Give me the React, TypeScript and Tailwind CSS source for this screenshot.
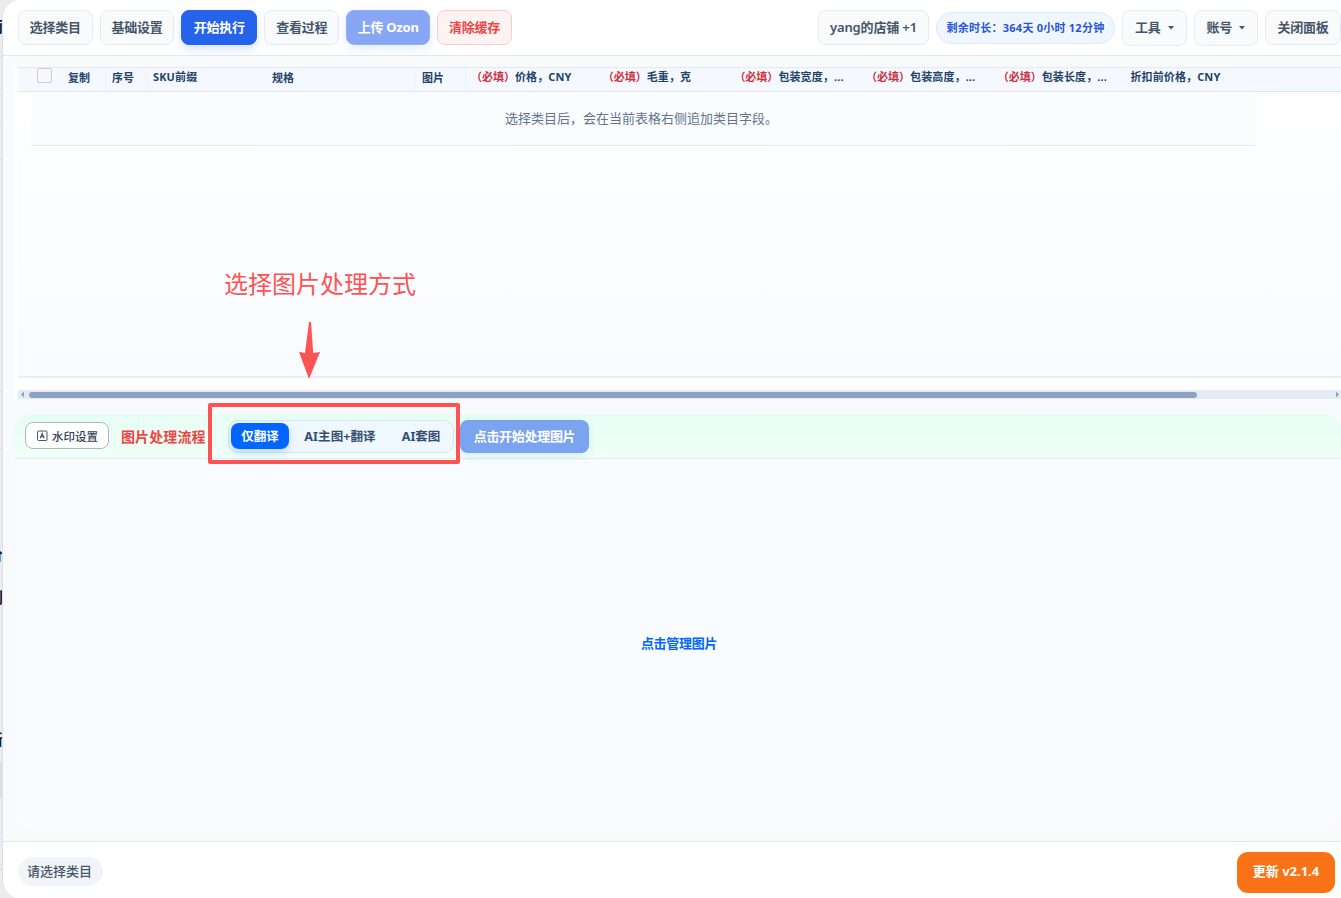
import React from "react";

const columns = [
  { label: "复制", width: "w-[44px]", divider: true },
  { label: "序号", width: "w-[41px]", divider: true },
  { label: "SKU前缀", width: "w-[119px]", high: true },
  { label: "规格", width: "w-[150px]", divider: true },
  { label: "图片", width: "w-[50px]", divider: true },
  { label: "价格，CNY", width: "w-[131.7px]", required: true, high: true },
  { label: "毛重，克", width: "w-[131.7px]", required: true, high: true },
  { label: "包装宽度，...", width: "w-[131.7px]", required: true, high: true },
  { label: "包装高度，...", width: "w-[131.7px]", required: true, high: true },
  { label: "包装长度，...", width: "w-[131.7px]", required: true, high: true },
  { label: "折扣前价格，CNY", width: "w-[131px]", high: true },
];

const backdropMarks = [
  { text: "而", top: "top-[15px]" },
  { text: "价", top: "top-[543px]" },
  { text: "到", top: "top-[586px]" },
  { text: "新", top: "top-[728px]" },
];

const backdropLines = ["top-[56px]", "top-[89px]", "top-[124px]", "top-[159px]", "top-[391px]", "top-[448px]", "top-[833px]", "top-[869px]"];

function ToolButton({
  children,
  className,
}: {
  children: React.ReactNode;
  className: string;
}) {
  return (
    <button
      className={
        "flex shrink-0 items-center justify-center whitespace-nowrap rounded-lg border text-[13px] font-semibold tracking-[-0.25px] " +
        className
      }
    >
      {children}
    </button>
  );
}

const plain = "border-[#e5eaf2] bg-[#f8fafc] text-[#475569]";

function Caret() {
  return (
    <svg width="6" height="4" viewBox="0 0 6 4" className="ml-[7px]" fill="#475569">
      <path d="M0 0h6L3 3.5z" />
    </svg>
  );
}

function TopBar() {
  return (
    <header className="flex h-[56px] shrink-0 items-start border-b border-[#e2e8f0] bg-white pt-[10px] pl-[15px]">
      <div className="flex gap-[7.1px]">
        <ToolButton className={plain + " h-[34.5px] w-[74.6px]"}>选择类目</ToolButton>
        <ToolButton className={plain + " h-[34.5px] w-[74.6px]"}>基础设置</ToolButton>
        <ToolButton className="h-[34.5px] w-[76px] border-[#2563eb] bg-[#2563eb] text-white shadow-[0_4px_10px_rgba(37,99,235,0.18)]">
          开始执行
        </ToolButton>
        <ToolButton className={plain + " h-[34.5px] w-[74.6px]"}>查看过程</ToolButton>
        <ToolButton className="h-[34.5px] w-[84px] border-[#93b0f5] bg-[#87a6f3] text-white shadow-[0_4px_12px_rgba(37,99,235,0.12)]">
          <span className="font-bold">上传 Ozon</span>
        </ToolButton>
        <ToolButton className="h-[34.5px] w-[74.6px] border-[#fecaca] bg-[#fef2f2] text-[#ef4444]">
          清除缓存
        </ToolButton>
      </div>
      <div className="ml-auto flex shrink-0 gap-[7px]">
        <ToolButton className={plain + " h-[34.5px] w-[111px]"}>
          <span className="tracking-[-0.15px]">yang的店铺 +1</span>
        </ToolButton>
        <div className="mt-[2px] flex h-[32px] w-[179px] items-center justify-center whitespace-nowrap rounded-full border border-[#dbeafe] bg-[#eff6ff] text-[11px] font-bold tracking-[0.24px] text-[#2855d8]">
          剩余时长：364天 0小时 12分钟
        </div>
        <ToolButton className={plain + " h-[35.5px] w-[64.5px]"}>
          工具
          <Caret />
        </ToolButton>
        <ToolButton className={plain + " h-[35.5px] w-[64.5px]"}>
          账号
          <Caret />
        </ToolButton>
        <ToolButton className={plain + " h-[34.5px] w-[76px]"}>关闭面板</ToolButton>
      </div>
    </header>
  );
}

function ProductTable() {
  return (
    <section className="flex h-[332px] shrink-0 flex-col bg-white pl-1">
      <div className="flex h-[25px] shrink-0 border-y border-t-[#e2ebf5] border-b-[#dfe7f0] bg-[#f5f9ff] pl-[13px] text-[11px] font-bold text-[#23426a]">
        <div className="w-[31px] shrink-0 pl-[6px]">
          <div className="h-[15px] w-[15px] rounded-[2px] border border-[#cdcdd0] bg-[#f8f8f8]" />
        </div>
        {columns.map((c) => (
          <div
            key={c.label}
            className={
              "h-[23px] shrink-0 whitespace-nowrap pl-[6px] " +
              c.width +
              (c.divider ? " border-r border-[#edf3fa]" : "") +
              (c.high ? " leading-[18px] tracking-[0.12px]" : " leading-[20px]")
            }
          >
            {c.required && (
              <span className="-ml-px font-semibold tracking-normal text-[#cf3040]">（必填）</span>
            )}
            {c.label}
          </div>
        ))}
      </div>
      <div className="flex h-[286px] shrink-0 flex-col border-b-2 border-[#e9edf5] bg-gradient-to-b from-white to-[#f8fbff]">
        <div className="ml-[13px] flex h-[54px] w-[1225px] items-center justify-center border-b border-[#e5e9f1] bg-[#fbfcff] pt-px text-[13px] text-[#64748b]">
          <span className="mr-[4px]">选择类目后，会在当前表格右侧追加类目字段。</span>
        </div>
      </div>
      <div className="h-[12px] shrink-0" />
      <div className="flex h-[9px] shrink-0 items-center bg-[#e4ebf5]">
        <svg width="11" height="9" viewBox="0 0 11 9" fill="#8ba0bf">
          <path d="M6 1.5v6L3 4.5z" />
        </svg>
        <div className="h-[6px] w-[1168px] rounded-full bg-[#8da3c2]" />
        <svg width="11" height="9" viewBox="0 0 11 9" fill="#8ba0bf" className="ml-auto">
          <path d="M6 1.5v6L9 4.5z" />
        </svg>
      </div>
    </section>
  );
}

function ImagePanel() {
  return (
    <section className="flex min-h-0 flex-1 flex-col overflow-hidden rounded-[16px] bg-[#f8fbff]">
      <div className="flex h-[45px] shrink-0 items-center border-b border-[#def0ea] bg-gradient-to-b from-[#e6fef3] to-[#f1fff8] pl-[11px]">
        <button className="mb-px flex h-[27px] w-[84px] shrink-0 items-center justify-center gap-[4px] rounded-lg border border-[#abb5c5] bg-white pt-[2px] text-[11.5px] font-medium text-[#334155]">
          <svg width="12" height="12" viewBox="0 0 12 12" fill="none" stroke="#475569" className="mb-px">
            <rect x="1.5" y="1" width="9.5" height="9.5" rx="1" />
            <path d="M4.2 8.2 6.2 3.5l2 4.7M5 6.7h2.4" strokeWidth="1.2" />
          </svg>
          水印设置
        </button>
        <span className="ml-[12px] w-[86px] shrink-0 whitespace-nowrap text-[14px] font-bold tracking-[0.1px] text-[#ef4444]">
          图片处理流程
        </span>
        <div className="ml-[21px] flex h-[33px] w-[226px] shrink-0 items-center rounded-[10px] border border-[#dbe5f2] bg-[#eff7ff] pl-[2px] text-[12.5px] leading-[20px] font-bold text-[#334e70]">
          <button className="flex h-[26px] w-[58px] items-center justify-center rounded-lg bg-[#0066ff] pt-[2px] text-white shadow-[0_4px_8px_rgba(0,102,255,0.2)]">
            仅翻译
          </button>
          <button className="w-[102px] pt-[2px] text-center tracking-[0.1px] whitespace-nowrap">AI主图+翻译</button>
          <button className="w-[60px] pt-[2px] text-center whitespace-nowrap">AI套图</button>
        </div>
        <button className="ml-[6px] h-[33px] w-[129px] shrink-0 rounded-lg bg-[#7aa3f0] pt-px text-[13px] font-bold tracking-[-0.3px] text-white shadow-[0_3px_8px_rgba(37,99,235,0.12)]">
          点击开始处理图片
        </button>
      </div>
      <div className="flex flex-1 items-center justify-center pb-px pl-[3px] text-[13px] font-bold tracking-[-0.3px] text-[#0066ff]">
        点击管理图片
      </div>
    </section>
  );
}

export default function App() {
  return (
    <div
      className="relative flex h-[898px] w-[1341px] overflow-hidden bg-[#ececef]"
      style={{ fontFamily: '"Noto Sans", "Noto Sans CJK SC", sans-serif' }}
    >
      <div className="w-[2px] shrink-0" />
      {backdropLines.map((top) => (
        <div key={top} className={"absolute left-0 h-px w-[3px] bg-[#dcdde1] " + top} />
      ))}
      <div className="absolute top-[762px] left-0 h-[36px] w-[3px] bg-[#dfdfe2]" />
      {backdropMarks.map((m) => (
        <span key={m.text} className={"absolute -left-[12px] text-[15px] font-bold text-[#111827] " + m.top}>
          {m.text}
        </span>
      ))}
      <main className="relative flex w-[1339px] shrink-0 flex-col overflow-hidden rounded-l-[18px] border-l border-[#d9e0ea] bg-[#f8fafc]">
        <TopBar />
        <div className="flex h-[785px] shrink-0 flex-col pt-[11px] pb-[11px] pl-[11px]">
          <ProductTable />
          <div className="h-[15px] shrink-0" />
          <ImagePanel />
        </div>
        <footer className="flex flex-1 items-center border-t border-[#e2e8f0] bg-white pr-[6px] pl-[15px]">
          <div className="mt-[3px] flex h-[29px] w-[85px] items-center justify-center rounded-full bg-[#f1f5f9] pr-[2px] text-[13px] font-medium text-[#475569]">
            请选择类目
          </div>
          <button className="mt-[4px] ml-auto flex h-[41px] w-[98px] items-center justify-center rounded-[11px] bg-[#f97316] text-[13px] font-bold text-white">
            更新 v2.1.4
          </button>
        </footer>
      </main>
      <div className="absolute top-[266px] left-[224px] text-[24px] leading-[36px] text-[#ff5353]">选择图片处理方式</div>
      <svg className="absolute top-[321px] left-[298px]" width="24" height="58" viewBox="0 0 24 58" fill="#ff5353">
        <path d="M11 1h2l2.2 31 6.8-1-11 27L1 31l6 1z" />
      </svg>
      <div className="absolute top-[403px] left-[208px] h-[61px] w-[252px] rounded-[2px] border-4 border-[#ff5353]" />
    </div>
  );
}
